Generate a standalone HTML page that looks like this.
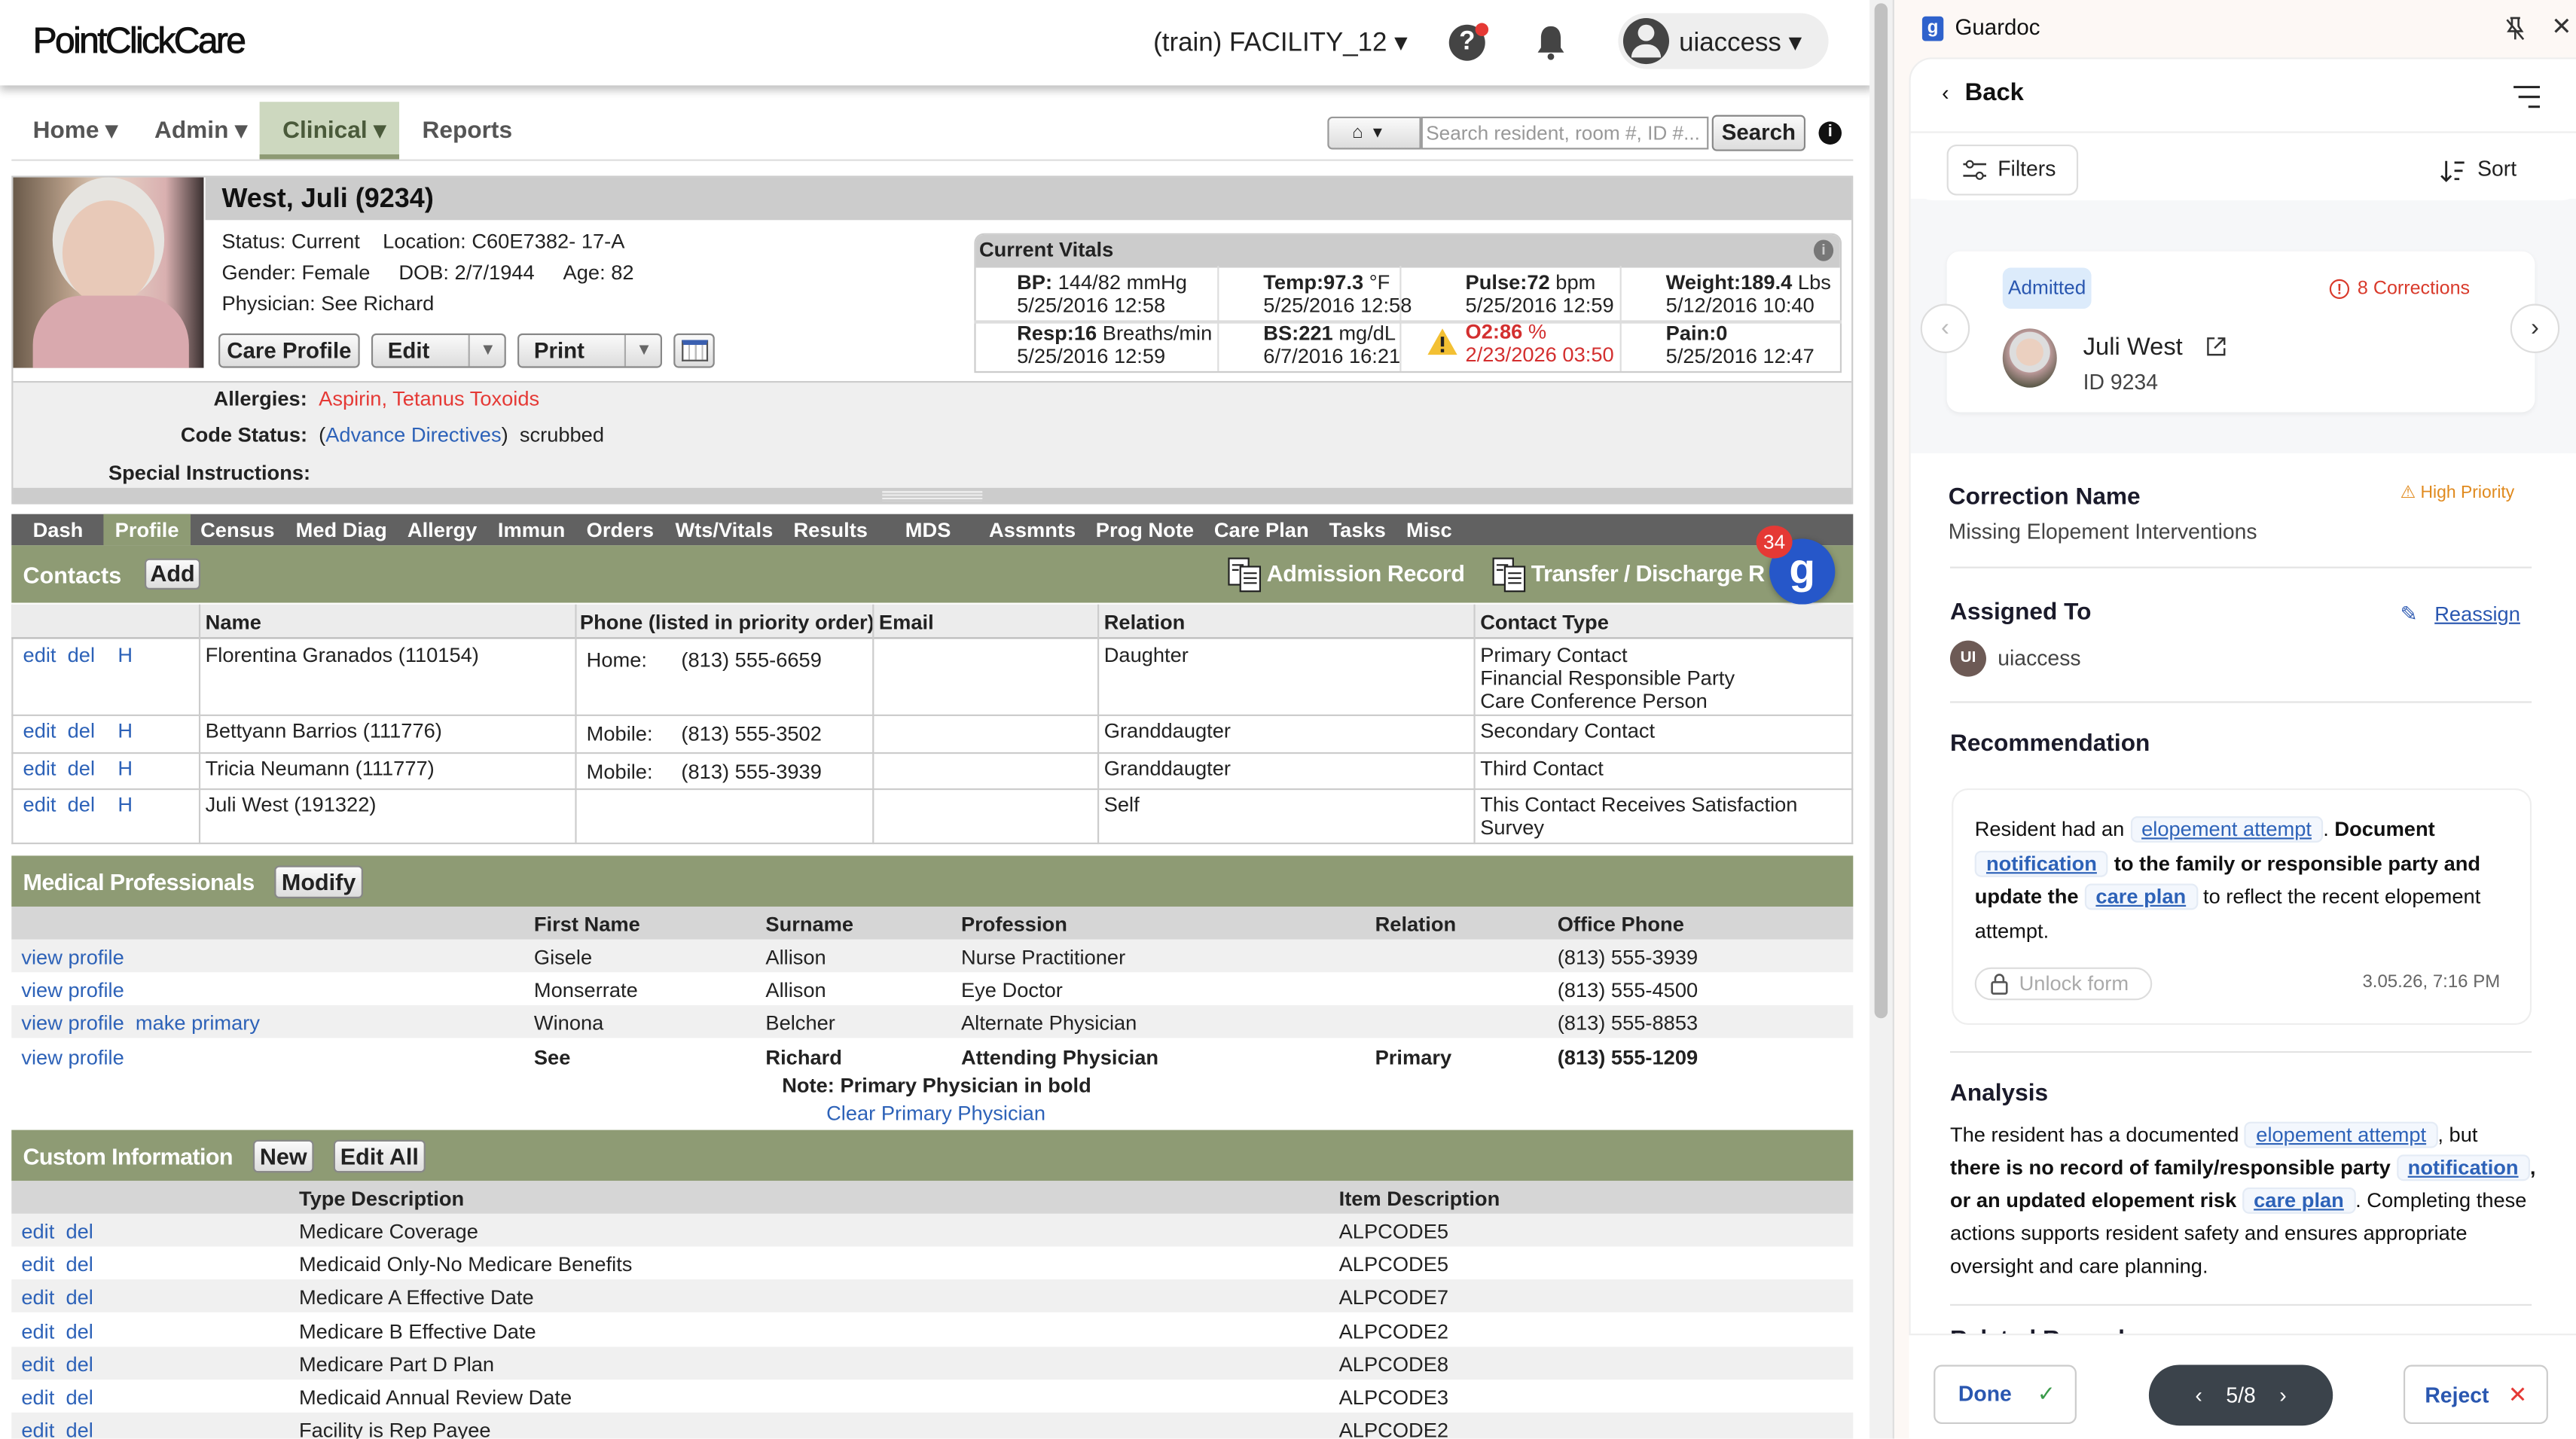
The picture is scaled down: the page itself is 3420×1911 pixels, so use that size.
<!DOCTYPE html>
<html><head><meta charset="utf-8"><style>
*{box-sizing:border-box;margin:0;padding:0}
html,body{width:3420px;height:1910px;overflow:hidden;background:#fff}
#s{position:absolute;left:0;top:0;width:1568px;height:876px;transform:scale(2.18112);transform-origin:0 0;font-family:"Liberation Sans",sans-serif;color:#222;font-size:12.5px;overflow:hidden}
.a{position:absolute;white-space:nowrap}
.b{font-weight:bold}
.lk{color:#2d62b8}
.gbar{position:absolute;left:7px;width:1121px;background:#8e9b74;color:#fff;font-weight:bold;font-size:14px}
.btn{position:absolute;background:linear-gradient(#fafafa,#ddd);border:1px solid #888;border-radius:3px;color:#222;font-weight:bold;font-size:14px;text-align:center}
.row{position:absolute;left:7px;width:1121px;height:20px}
.gd{font-family:"Liberation Sans",sans-serif}
.chip{color:#2d62b8;text-decoration:underline;background:#f3f7fd;border:1px solid #e4ebf5;border-radius:4px;padding:0 6px}
.dv{position:absolute;left:1186px;width:354px;height:1px;background:#e3e3e3}
</style></head><body><div id="s">
<!-- header -->
<div class="a" style="left:0;top:0;width:1140px;height:52px;background:#fff;box-shadow:0 3px 5px rgba(0,0,0,.25)"></div>
<div class="a" style="left:20px;top:12px;font-size:22px;letter-spacing:-1.2px;color:#111;-webkit-text-stroke:0.4px #111">PointClickCare</div>
<div class="a" style="left:702px;top:16px;font-size:16px;color:#222">(train) FACILITY_12 ▾</div>
<div class="a" style="left:882px;top:15px;width:22px;height:22px;border-radius:50%;background:#444;color:#fff;text-align:center;font-weight:bold;font-size:16px;line-height:22px">?</div>
<div class="a" style="left:898px;top:14px;width:8px;height:8px;border-radius:50%;background:#e53935"></div>
<svg class="a" style="left:934px;top:15px" width="20" height="22" viewBox="0 0 20 22"><path d="M10 1c-4 0-6 3-6 7v6l-2 3h16l-2-3V8c0-4-2-7-6-7z" fill="#444"/><circle cx="10" cy="19.5" r="2" fill="#444"/></svg>
<div class="a" style="left:985px;top:8px;width:128px;height:34px;border-radius:17px;background:#eee"></div>
<div class="a" style="left:988px;top:11px;width:28px;height:28px;border-radius:50%;background:#444"></div>
<div class="a" style="left:997px;top:15px;width:10px;height:10px;border-radius:50%;background:#eee"></div>
<div class="a" style="left:993px;top:27px;width:18px;height:8px;border-radius:9px 9px 0 0;background:#eee"></div>
<div class="a" style="left:1022px;top:16px;font-size:16px">uiaccess ▾</div>
<!-- nav -->
<div class="a" style="left:158px;top:62px;width:85px;height:35px;background:#cdd8bf;border-bottom:3px solid #8e9b74"></div>
<div class="a b" style="left:20px;top:72px;font-size:14.5px;color:#555">Home ▾</div>
<div class="a b" style="left:94px;top:72px;font-size:14.5px;color:#555">Admin ▾</div>
<div class="a b" style="left:172px;top:72px;font-size:14.5px;color:#4a5a3a">Clinical ▾</div>
<div class="a b" style="left:257px;top:72px;font-size:14.5px;color:#555">Reports</div>
<div class="a" style="left:7px;top:97px;width:1121px;height:1px;background:#ddd"></div>
<div class="a" style="left:808px;top:71px;width:57px;height:20px;border:1px solid #999;border-radius:3px 0 0 3px;background:linear-gradient(#fafafa,#ddd);font-size:11px;line-height:18px;padding-left:14px">⌂ &nbsp;▾</div>
<div class="a" style="left:865px;top:71px;width:175px;height:20px;border:1px solid #999;font-size:12px;color:#999;line-height:18px;padding-left:2px">Search resident, room #, ID #...</div>
<div class="btn" style="left:1042px;top:70px;width:57px;height:22px;font-size:13.5px;line-height:20px">Search</div>
<div class="a" style="left:1107px;top:74px;width:14px;height:14px;border-radius:50%;background:#111;color:#fff;font-size:10px;font-weight:bold;text-align:center;line-height:14px">i</div>
<!-- patient -->
<div class="a" style="left:7px;top:107px;width:1121px;height:200px;border:1px solid #ccc;background:#fff"></div>
<div class="a" style="left:125px;top:108px;width:1002px;height:26px;background:#ccc"></div>
<div class="a" style="left:8px;top:108px;width:116px;height:116px;background:linear-gradient(90deg,#6a5a4a,#b9a08a 30%,#e8d6c8 50%,#d9b0b0 80%,#3a3030)"></div>
<div class="a" style="left:38px;top:122px;width:56px;height:64px;border-radius:50%;background:#e8c9b8;box-shadow:0 -8px 0 6px #e6e4e0"></div>
<div class="a" style="left:20px;top:180px;width:95px;height:44px;border-radius:30px 30px 0 0;background:#d9a9ae"></div>
<div class="a b" style="left:135px;top:112px;font-size:16.5px;color:#111">West, Juli (9234)</div>
<div class="a" style="left:135px;top:140px;font-size:12.5px">Status: Current &nbsp;&nbsp;&nbsp;Location: C60E7382- 17-A</div>
<div class="a" style="left:135px;top:159px;font-size:12.5px">Gender: Female &nbsp;&nbsp;&nbsp;&nbsp;DOB: 2/7/1944 &nbsp;&nbsp;&nbsp;&nbsp;Age: 82</div>
<div class="a" style="left:135px;top:178px;font-size:12.5px">Physician: See Richard</div>
<div class="btn" style="left:133px;top:203px;width:86px;height:21px;font-size:13.5px;line-height:19px">Care Profile</div>
<div class="btn" style="left:226px;top:203px;width:82px;height:21px;font-size:13.5px;line-height:19px;text-align:left;padding-left:9px">Edit<span style="position:absolute;left:58px;top:0;width:23px;height:19px;border-left:1px solid #aaa;text-align:center;color:#666;font-size:10px">▼</span></div>
<div class="btn" style="left:315px;top:203px;width:88px;height:21px;font-size:13.5px;line-height:19px;text-align:left;padding-left:9px">Print<span style="position:absolute;left:64px;top:0;width:23px;height:19px;border-left:1px solid #aaa;text-align:center;color:#666;font-size:10px">▼</span></div>
<div class="btn" style="left:410px;top:203px;width:25px;height:21px"><div style="margin:3px auto;width:16px;height:13px;border:1px solid #555;border-top:3px solid #3a5fb0;background:repeating-linear-gradient(90deg,#fff 0 3px,#bbb 3px 4px)"></div></div>
<!-- vitals -->
<div class="a" style="left:593px;top:142px;width:528px;height:85px;border:1px solid #ccc;border-radius:6px 6px 0 0;overflow:hidden">
<div style="height:20px;background:#ccc;font-weight:bold;font-size:12.5px;padding:2px 2px">Current Vitals<span style="position:absolute;right:4px;top:3px;width:12px;height:13px;border-radius:50%;background:#777;color:#ccc;font-size:9px;text-align:center;line-height:13px">i</span></div>
</div>
<div class="a" style="left:593px;top:195px;width:528px;height:2px;background:#ddd"></div>
<div class="a" style="left:741px;top:162px;width:1px;height:64px;background:#ddd"></div>
<div class="a" style="left:852px;top:162px;width:1px;height:64px;background:#ddd"></div>
<div class="a" style="left:986px;top:162px;width:1px;height:64px;background:#ddd"></div>
<div class="a" style="left:619px;top:165px;line-height:14px"><b>BP:</b> 144/82 mmHg<br>5/25/2016 12:58</div>
<div class="a" style="left:769px;top:165px;line-height:14px"><b>Temp:97.3</b> °F<br>5/25/2016 12:58</div>
<div class="a" style="left:892px;top:165px;line-height:14px"><b>Pulse:72</b> bpm<br>5/25/2016 12:59</div>
<div class="a" style="left:1014px;top:165px;line-height:14px"><b>Weight:189.4</b> Lbs<br>5/12/2016 10:40</div>
<div class="a" style="left:619px;top:196px;line-height:14px"><b>Resp:16</b> Breaths/min<br>5/25/2016 12:59</div>
<div class="a" style="left:769px;top:196px;line-height:14px"><b>BS:221</b> mg/dL<br>6/7/2016 16:21</div>
<div class="a" style="left:892px;top:195px;line-height:14px;color:#d32f2f"><b>O2:86</b> %<br>2/23/2026 03:50</div>
<svg class="a" style="left:868px;top:199px" width="20" height="18"><path d="M10 1L19 17H1z" fill="#f3c033"/><rect x="9" y="6" width="2" height="6" fill="#222"/><rect x="9" y="13.5" width="2" height="2" fill="#222"/></svg>
<div class="a" style="left:1014px;top:196px;line-height:14px"><b>Pain:0</b><br>5/25/2016 12:47</div>
<div class="a" style="left:8px;top:232px;width:1119px;height:65px;background:#efefef;border-top:1px solid #ccc"></div>
<div class="a b" style="left:130px;top:236px">Allergies:</div>
<div class="a" style="left:194px;top:236px;color:#e53935">Aspirin, Tetanus Toxoids</div>
<div class="a b" style="left:110px;top:258px">Code Status:</div>
<div class="a" style="left:194px;top:258px">(<span class="lk">Advance Directives</span>) &nbsp;scrubbed</div>
<div class="a b" style="left:66px;top:281px">Special Instructions:</div>
<div class="a" style="left:8px;top:297px;width:1119px;height:10px;background:#ccc"></div>
<div class="a" style="left:537px;top:299px;width:61px;height:6px;background:repeating-linear-gradient(#eee 0 1px,#ccc 1px 2px)"></div>
<!-- tabs -->
<div class="a" style="left:7px;top:313px;width:1121px;height:19px;background:#616161"></div>
<div class="a" style="left:63px;top:313px;width:53px;height:19px;background:#8e9b74"></div>
<div class="a b" style="left:0;top:316px;color:#fff;font-size:12.5px;width:900px">
<span class="a" style="left:20px">Dash</span><span class="a" style="left:70px">Profile</span><span class="a" style="left:122px">Census</span><span class="a" style="left:180px">Med Diag</span><span class="a" style="left:248px">Allergy</span><span class="a" style="left:303px">Immun</span><span class="a" style="left:357px">Orders</span><span class="a" style="left:411px">Wts/Vitals</span><span class="a" style="left:483px">Results</span><span class="a" style="left:551px">MDS</span><span class="a" style="left:602px">Assmnts</span><span class="a" style="left:667px">Prog Note</span><span class="a" style="left:739px">Care Plan</span><span class="a" style="left:809px">Tasks</span><span class="a" style="left:856px">Misc</span></div>
<!-- contacts -->
<div class="gbar" style="top:332px;height:35px"><span class="a" style="left:7px;top:10px">Contacts</span></div>
<div class="btn" style="left:88px;top:340px;width:34px;height:19px;line-height:17px">Add</div>
<svg class="a" style="left:747px;top:339px" width="22" height="22"><rect x="1" y="1" width="12" height="16" fill="#fff" stroke="#222"/><rect x="8" y="6" width="12" height="15" fill="#fff" stroke="#222"/><path d="M3 5h7M3 8h4M10 10h8M10 13h8M10 16h8" stroke="#222"/></svg>
<div class="a b" style="left:771px;top:341px;color:#fff;font-size:14px;letter-spacing:-0.2px">Admission Record</div>
<svg class="a" style="left:908px;top:339px" width="22" height="22"><rect x="1" y="1" width="12" height="16" fill="#fff" stroke="#222"/><rect x="8" y="6" width="12" height="15" fill="#fff" stroke="#222"/><path d="M3 5h7M3 8h4M10 10h8M10 13h8M10 16h8" stroke="#222"/></svg>
<div class="a b" style="left:932px;top:341px;color:#fff;font-size:14px;letter-spacing:-0.3px">Transfer / Discharge R</div>
<div class="a" style="left:1077px;top:328px;width:40px;height:40px;border-radius:50%;background:#2657c9;color:#fff;font-weight:bold;font-size:26px;text-align:center;line-height:36px;box-shadow:0 1px 4px rgba(0,0,0,.3)">g</div>
<div class="a" style="left:1069px;top:320px;width:22px;height:20px;border-radius:50%;background:#e53935;color:#fff;font-size:12px;text-align:center;line-height:20px">34</div>
<div class="a" style="left:7px;top:368px;width:1121px;height:146px;border:1px solid #ccc;border-top:none"></div>
<div class="a" style="left:7px;top:368px;width:1121px;height:21px;background:#ececec;border-bottom:1px solid #bbb"></div>
<div class="a b" style="left:125px;top:372px">Name</div><div class="a b" style="left:353px;top:372px">Phone (listed in priority order)</div><div class="a b" style="left:535px;top:372px">Email</div><div class="a b" style="left:672px;top:372px">Relation</div><div class="a b" style="left:901px;top:372px">Contact Type</div>
<div class="a" style="left:121px;top:368px;width:1px;height:146px;background:#ccc"></div><div class="a" style="left:350px;top:368px;width:1px;height:146px;background:#ccc"></div><div class="a" style="left:531px;top:368px;width:1px;height:146px;background:#ccc"></div><div class="a" style="left:668px;top:368px;width:1px;height:146px;background:#ccc"></div><div class="a" style="left:897px;top:368px;width:1px;height:146px;background:#ccc"></div>
<div class="a" style="left:7px;top:435px;width:1121px;height:1px;background:#ccc"></div><div class="a" style="left:7px;top:458px;width:1121px;height:1px;background:#ccc"></div><div class="a" style="left:7px;top:480px;width:1121px;height:1px;background:#ccc"></div>
<div class="a lk" style="left:14px;top:392px">edit &nbsp;del &nbsp;&nbsp;&nbsp;H</div><div class="a" style="left:125px;top:392px">Florentina Granados (110154)</div><div class="a" style="left:357px;top:395px">Home: &nbsp;&nbsp;&nbsp;&nbsp;&nbsp;(813) 555-6659</div><div class="a" style="left:672px;top:392px">Daughter</div><div class="a" style="left:901px;top:392px;line-height:14px">Primary Contact<br>Financial Responsible Party<br>Care Conference Person</div>
<div class="a lk" style="left:14px;top:438px">edit &nbsp;del &nbsp;&nbsp;&nbsp;H</div><div class="a" style="left:125px;top:438px">Bettyann Barrios (111776)</div><div class="a" style="left:357px;top:440px">Mobile: &nbsp;&nbsp;&nbsp;&nbsp;(813) 555-3502</div><div class="a" style="left:672px;top:438px">Granddaugter</div><div class="a" style="left:901px;top:438px">Secondary Contact</div>
<div class="a lk" style="left:14px;top:461px">edit &nbsp;del &nbsp;&nbsp;&nbsp;H</div><div class="a" style="left:125px;top:461px">Tricia Neumann (111777)</div><div class="a" style="left:357px;top:463px">Mobile: &nbsp;&nbsp;&nbsp;&nbsp;(813) 555-3939</div><div class="a" style="left:672px;top:461px">Granddaugter</div><div class="a" style="left:901px;top:461px">Third Contact</div>
<div class="a lk" style="left:14px;top:483px">edit &nbsp;del &nbsp;&nbsp;&nbsp;H</div><div class="a" style="left:125px;top:483px">Juli West (191322)</div><div class="a" style="left:672px;top:483px">Self</div><div class="a" style="left:901px;top:483px;line-height:14px">This Contact Receives Satisfaction<br>Survey</div>
<!-- medical professionals -->
<div class="gbar" style="top:521px;height:31px"><span class="a" style="left:7px;top:8px;letter-spacing:-0.3px">Medical Professionals</span></div>
<div class="btn" style="left:167px;top:527px;width:54px;height:20px;line-height:18px">Modify</div>
<div class="row" style="top:552px;background:#d6d6d6"></div>
<div class="row" style="top:572px;background:#f0f0f0"></div><div class="row" style="top:612px;background:#f0f0f0"></div>
<div class="a b" style="left:325px;top:556px">First Name</div><div class="a b" style="left:466px;top:556px">Surname</div><div class="a b" style="left:585px;top:556px">Profession</div><div class="a b" style="left:837px;top:556px">Relation</div><div class="a b" style="left:948px;top:556px">Office Phone</div>
<div class="a lk" style="left:13px;top:576px">view profile</div><div class="a" style="left:325px;top:576px">Gisele</div><div class="a" style="left:466px;top:576px">Allison</div><div class="a" style="left:585px;top:576px">Nurse Practitioner</div><div class="a" style="left:948px;top:576px">(813) 555-3939</div>
<div class="a lk" style="left:13px;top:596px">view profile</div><div class="a" style="left:325px;top:596px">Monserrate</div><div class="a" style="left:466px;top:596px">Allison</div><div class="a" style="left:585px;top:596px">Eye Doctor</div><div class="a" style="left:948px;top:596px">(813) 555-4500</div>
<div class="a lk" style="left:13px;top:616px">view profile &nbsp;make primary</div><div class="a" style="left:325px;top:616px">Winona</div><div class="a" style="left:466px;top:616px">Belcher</div><div class="a" style="left:585px;top:616px">Alternate Physician</div><div class="a" style="left:948px;top:616px">(813) 555-8853</div>
<div class="a lk" style="left:13px;top:637px">view profile</div><div class="a b" style="left:325px;top:637px">See</div><div class="a b" style="left:466px;top:637px">Richard</div><div class="a b" style="left:585px;top:637px">Attending Physician</div><div class="a b" style="left:837px;top:637px">Primary</div><div class="a b" style="left:948px;top:637px">(813) 555-1209</div>
<div class="a b" style="left:476px;top:654px">Note: Primary Physician in bold</div>
<div class="a lk" style="left:503px;top:671px">Clear Primary Physician</div>
<!-- custom info -->
<div class="gbar" style="top:688px;height:31px"><span class="a" style="left:7px;top:8px;letter-spacing:-0.3px">Custom Information</span></div>
<div class="btn" style="left:154px;top:694px;width:37px;height:20px;line-height:18px">New</div>
<div class="btn" style="left:203px;top:694px;width:56px;height:20px;line-height:18px">Edit All</div>
<div class="row" style="top:719px;background:#d6d6d6"></div>
<div class="row" style="top:739px;background:#f0f0f0"></div><div class="row" style="top:779px;background:#f0f0f0"></div><div class="row" style="top:820px;background:#f0f0f0"></div><div class="row" style="top:860px;background:#f0f0f0"></div>
<div class="a b" style="left:182px;top:723px">Type Description</div><div class="a b" style="left:815px;top:723px">Item Description</div>
<div class="a lk" style="left:13px;top:743px">edit &nbsp;del</div><div class="a" style="left:182px;top:743px">Medicare Coverage</div><div class="a" style="left:815px;top:743px">ALPCODE5</div>
<div class="a lk" style="left:13px;top:763px">edit &nbsp;del</div><div class="a" style="left:182px;top:763px">Medicaid Only-No Medicare Benefits</div><div class="a" style="left:815px;top:763px">ALPCODE5</div>
<div class="a lk" style="left:13px;top:783px">edit &nbsp;del</div><div class="a" style="left:182px;top:783px">Medicare A Effective Date</div><div class="a" style="left:815px;top:783px">ALPCODE7</div>
<div class="a lk" style="left:13px;top:804px">edit &nbsp;del</div><div class="a" style="left:182px;top:804px">Medicare B Effective Date</div><div class="a" style="left:815px;top:804px">ALPCODE2</div>
<div class="a lk" style="left:13px;top:824px">edit &nbsp;del</div><div class="a" style="left:182px;top:824px">Medicare Part D Plan</div><div class="a" style="left:815px;top:824px">ALPCODE8</div>
<div class="a lk" style="left:13px;top:844px">edit &nbsp;del</div><div class="a" style="left:182px;top:844px">Medicaid Annual Review Date</div><div class="a" style="left:815px;top:844px">ALPCODE3</div>
<div class="a lk" style="left:13px;top:864px">edit &nbsp;del</div><div class="a" style="left:182px;top:864px">Facility is Rep Payee</div><div class="a" style="left:815px;top:864px">ALPCODE2</div>
<!-- scrollbar -->
<div class="a" style="left:1138px;top:0;width:14px;height:876px;background:#f1f1f1"></div>
<div class="a" style="left:1141px;top:2px;width:8px;height:618px;border-radius:4px;background:#c1c1c1"></div>
<!-- guardoc panel -->
<div class="a gd" style="left:1152px;top:0;width:416px;height:876px;background:#fdf8f5;border-left:1px solid #ddd">
<div class="a" style="left:17px;top:10px;width:13px;height:15px;border-radius:2px;background:#2f62cc;color:#fff;font-size:11px;font-weight:bold;text-align:center;line-height:14px">g</div>
<div class="a" style="left:37px;top:9px;font-size:13.5px;color:#111">Guardoc</div>
<svg class="a" style="left:371px;top:10px" width="14" height="15"><path d="M4 1h6M5 1v5l-2 3h8l-2-3V1M7 9v5M2 2l10 12" stroke="#333" fill="none" stroke-width="1.2"/></svg>
<div class="a" style="left:400px;top:7px;font-size:15px;color:#333">✕</div>
<div class="a" style="left:9px;top:35px;width:410px;height:845px;background:#fff;border:1px solid #eee;border-radius:14px 0 0 0;overflow:hidden">
<div class="a" style="left:0;top:0;width:410px;height:45px;border-bottom:1px solid #eee"></div>
<div class="a" style="left:19px;top:13px;font-size:13px;color:#111">‹</div>
<div class="a" style="left:33px;top:12px;font-size:15px;font-weight:bold;color:#111">Back</div>
<svg class="a" style="left:366px;top:16px" width="18" height="14"><path d="M1 1h16M4 7h13M10 13h7" stroke="#222" stroke-width="1.4"/></svg>
<div class="a" style="left:0;top:85px;width:410px;height:155px;background:#f6f7f9"></div>
<div class="a" style="left:0;top:46px;width:410px;height:40px;background:#fff;border-radius:0 0 14px 14px"></div>
<div class="a" style="left:22px;top:52px;width:80px;height:31px;border:1px solid #ddd;border-radius:6px;background:#fff"></div>
<svg class="a" style="left:31px;top:61px" width="16" height="14"><path d="M1 3h14M1 10h14" stroke="#333" stroke-width="1.2"/><circle cx="5" cy="3" r="2" fill="#fff" stroke="#333"/><circle cx="11" cy="10" r="2" fill="#fff" stroke="#333"/></svg>
<div class="a" style="left:53px;top:59px;font-size:13px;color:#222">Filters</div>
<svg class="a" style="left:322px;top:61px" width="16" height="14"><path d="M4 1v12M1 10l3 3 3-3M9 2h6M9 7h5M9 12h3" stroke="#222" stroke-width="1.3" fill="none"/></svg>
<div class="a" style="left:345px;top:59px;font-size:13px;color:#222">Sort</div>
<div class="a" style="left:22px;top:117px;width:358px;height:98px;background:#fff;border-radius:8px;box-shadow:0 1px 3px rgba(0,0,0,.06)"></div>
<div class="a" style="left:6px;top:149px;width:30px;height:30px;border-radius:50%;background:#fff;border:1px solid #ddd;color:#bbb;text-align:center;line-height:27px;font-size:15px">‹</div>
<div class="a" style="left:365px;top:149px;width:30px;height:30px;border-radius:50%;background:#fff;border:1px solid #ddd;color:#333;text-align:center;line-height:27px;font-size:15px">›</div>
<div class="a" style="left:56px;top:127px;width:54px;height:25px;border-radius:5px;background:#dcebfb;color:#2a57b0;font-size:12px;text-align:center;line-height:25px">Admitted</div>
<div class="a" style="left:255px;top:134px;width:12px;height:12px;border:1.3px solid #d93a2b;border-radius:50%;color:#d93a2b;font-size:9px;font-weight:bold;text-align:center;line-height:10px">!</div>
<div class="a" style="left:272px;top:134px;font-size:11.5px;color:#d93a2b">8 Corrections</div>
<div class="a" style="left:56px;top:164px;width:33px;height:36px;border-radius:50%;background:radial-gradient(circle at 50% 40%,#ebd0c0 0 30%,#ddd 31% 45%,#b99 46%,#554 80%)"></div>
<div class="a" style="left:105px;top:167px;font-size:15px;color:#222">Juli West</div>
<svg class="a" style="left:180px;top:169px" width="12" height="12"><path d="M5 1H1v10h10V7M7 1h4v4M11 1L5 7" stroke="#333" fill="none" stroke-width="1.1"/></svg>
<div class="a" style="left:105px;top:189px;font-size:13px;color:#444">ID 9234</div>
<div class="a" style="left:23px;top:259px;font-size:14.5px;font-weight:bold;color:#1a1a2a">Correction Name</div>
<div class="a" style="left:23px;top:280px;font-size:13px;color:#444">Missing Elopement Interventions</div>
<div class="a" style="left:298px;top:258px;font-size:10.5px;color:#e08a1e">⚠ High Priority</div>
</div>
<div class="dv" style="left:34px;top:345px"></div>
<div class="a" style="left:34px;top:365px;font-size:14.5px;font-weight:bold;color:#1a1a2a">Assigned To</div>
<div class="a" style="left:308px;top:366px;font-size:12.5px;color:#2a57b0">✎ &nbsp;&nbsp;<u>Reassign</u></div>
<div class="a" style="left:34px;top:390px;width:22px;height:22px;border-radius:50%;background:#6d5a55;color:#fff;font-size:9.5px;font-weight:bold;text-align:center;line-height:22px">UI</div>
<div class="a" style="left:63px;top:393px;font-size:13px;color:#444">uiaccess</div>
<div class="dv" style="left:34px;top:427px"></div>
<div class="a" style="left:34px;top:445px;font-size:14.5px;font-weight:bold;color:#1a1a2a">Recommendation</div>
<div class="a" style="left:35px;top:480px;width:353px;height:144px;border:1px solid #eee;border-radius:10px"></div>
<div class="a" style="left:49px;top:495px;font-size:12.5px;line-height:20.5px;color:#111">Resident had an <span class="chip">elopement attempt</span>. <b>Document</b><br><b><span class="chip">notification</span> to the family or responsible party and</b><br><b>update the</b> <span class="chip"><b>care plan</b></span> to reflect the recent elopement<br>attempt.</div>
<div class="a" style="left:49px;top:589px;width:108px;height:20px;border:1px solid #ddd;border-radius:10px;color:#aaa;font-size:12.5px;line-height:18px;padding-left:26px">Unlock form</div>
<svg class="a" style="left:58px;top:592px" width="12" height="14"><rect x="1.5" y="6" width="9" height="7" rx="1" fill="none" stroke="#555" stroke-width="1.2"/><path d="M3.5 6V4a2.5 2.5 0 0 1 5 0v2" fill="none" stroke="#555" stroke-width="1.2"/></svg>
<div class="a" style="left:285px;top:592px;font-size:11px;color:#666">3.05.26, 7:16 PM</div>
<div class="dv" style="left:34px;top:640px"></div>
<div class="a" style="left:34px;top:658px;font-size:14.5px;font-weight:bold;color:#1a1a2a">Analysis</div>
<div class="a" style="left:34px;top:681px;font-size:12.5px;line-height:20px;color:#111">The resident has a documented <span class="chip">elopement attempt</span>, but<br><b>there is no record of family/responsible party <span class="chip">notification</span>,</b><br><b>or an updated elopement risk <span class="chip">care plan</span></b>. Completing these<br>actions supports resident safety and ensures appropriate<br>oversight and care planning.</div>
<div class="dv" style="left:34px;top:794px"></div>
<div class="a" style="left:34px;top:808px;font-size:14.5px;font-weight:bold;color:#1a1a2a">Related Records</div>
<div class="a" style="left:9px;top:812px;width:410px;height:64px;background:#fff;border-top:1px solid #eee"></div>
<div class="a" style="left:24px;top:831px;width:87px;height:36px;border:1px solid #ccc;border-radius:5px;color:#2a57b0;font-size:13px;font-weight:bold;line-height:34px;padding-left:14px">Done <span style="color:#3a9a4a;font-weight:normal;margin-left:12px">✓</span></div>
<div class="a" style="left:155px;top:831px;width:112px;height:37px;border-radius:19px;background:#3b434b;color:#fff;font-size:13px;text-align:center;line-height:37px">‹ &nbsp;&nbsp;&nbsp;5/8&nbsp;&nbsp;&nbsp; ›</div>
<div class="a" style="left:310px;top:831px;width:88px;height:36px;border:1px solid #ccc;border-radius:5px;color:#2a57b0;font-size:13px;font-weight:bold;line-height:34px;padding-left:12px">Reject <span style="color:#e53935;font-weight:normal;margin-left:8px;font-size:14px">✕</span></div>
</div>
</div></body></html>
